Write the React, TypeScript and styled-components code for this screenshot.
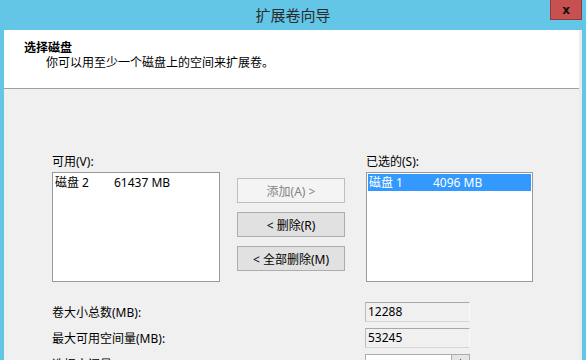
import React from "react";
import styled, { createGlobalStyle } from "styled-components";

const Global = createGlobalStyle`
  html, body {
    margin: 0;
    padding: 0;
    width: 586px;
    height: 360px;
    overflow: hidden;
  }
  body {
    font-family: "Noto Sans", "Noto Sans CJK SC", sans-serif;
    font-size: 12px;
    color: #000;
  }
`;

const Frame = styled.div`
  width: 586px;
  height: 360px;
  background: #63c6e7;
  display: flex;
  flex-direction: column;
  overflow: hidden;
`;

const TitleBar = styled.div`
  height: 30px;
  flex-shrink: 0;
  display: grid;
  grid-template-columns: 1fr auto 1fr;
  align-items: start;
`;

const Title = styled.div`
  grid-column: 2;
  font-family: "Noto Sans CJK SC", sans-serif;
  font-size: 15px;
  line-height: 30px;
  color: #2b2b2b;
`;

const CloseButton = styled.div`
  grid-column: 3;
  justify-self: end;
  margin-right: 4px;
  width: 30px;
  height: 19px;
  background: #c75050;
  border: 1px solid #8e3a3a;
  border-top: none;
  display: flex;
  align-items: center;
  justify-content: center;
  font-family: "DejaVu Sans", sans-serif;
  font-weight: bold;
  font-size: 12px;
  color: #111;
`;

const Client = styled.div`
  flex: 1;
  margin: 0 4px;
  border-right: 3px solid #ececec;
  display: flex;
  flex-direction: column;
  min-height: 0;
`;

const Header = styled.div`
  height: 58px;
  flex-shrink: 0;
  background: #fff;
  border-bottom: 1px solid #a0a0a0;
  padding: 10px 0 0 20px;
  box-sizing: border-box;
  height: 59px;
`;

const HeaderTitle = styled.div`
  font-weight: bold;
  line-height: 15px;
`;

const HeaderText = styled.div`
  line-height: 15px;
  margin-left: 22px;
`;

const Body = styled.div`
  flex: 1;
  background: #f0f0f0;
  padding: 65px 0 0 48px;
  overflow: hidden;
`;

const ListsRow = styled.div`
  display: flex;
  align-items: flex-start;
`;

const ListColumn = styled.div`
  display: flex;
  flex-direction: column;
`;

const FieldLabel = styled.div`
  height: 18px;
  line-height: 15px;
`;

const ListBox = styled.div<{ $width: number }>`
  width: ${(p) => p.$width}px;
  height: 110px;
  box-sizing: border-box;
  background: #fff;
  border: 1px solid #9a9a9a;
  padding: 1px 1px;
`;

const ListItem = styled.div<{ $selected?: boolean }>`
  display: flex;
  height: 17px;
  line-height: 17px;
  padding-left: 1px;
  background: ${(p) => (p.$selected ? "#3399ff" : "transparent")};
  color: ${(p) => (p.$selected ? "#fff" : "#000")};
`;

const NameCell = styled.span<{ $width: number }>`
  width: ${(p) => p.$width}px;
  flex-shrink: 0;
`;

const ButtonColumn = styled.div`
  display: flex;
  flex-direction: column;
  gap: 9px;
  margin: 24px 21px 0 17px;
`;

const Button = styled.div<{ $disabled?: boolean }>`
  width: 108px;
  height: 25px;
  box-sizing: border-box;
  display: flex;
  align-items: center;
  justify-content: center;
  background: ${(p) => (p.$disabled ? "#f4f4f4" : "#e1e1e1")};
  border: 1px solid ${(p) => (p.$disabled ? "#bfbfbf" : "#adadad")};
  color: ${(p) => (p.$disabled ? "#838383" : "#000")};
`;

const InfoRows = styled.div`
  display: flex;
  flex-direction: column;
  gap: 6px;
  margin-top: 20px;
`;

const InfoRow = styled.div`
  display: flex;
  align-items: center;
  height: 20px;
`;

const InfoLabel = styled.div`
  width: 313px;
  line-height: 15px;
`;

const ReadOnlyBox = styled.div`
  width: 105px;
  height: 20px;
  box-sizing: border-box;
  border: 1px solid #d7d7d7;
  border-top-color: #a8a8a8;
  border-left-color: #bcbcbc;
  border-right-color: #fafafa;
  padding-left: 2px;
  line-height: 18px;
`;

const SpinBox = styled.div`
  display: flex;
  height: 21px;
`;

const SpinInput = styled.div`
  width: 87px;
  box-sizing: border-box;
  background: #fff;
  border: 1px solid #abadb3;
  padding-left: 2px;
  line-height: 19px;
`;

const SpinButton = styled.div`
  width: 18px;
  box-sizing: border-box;
  background: #e5e5e5;
  border: 1px solid #acacac;
  border-left: none;
  display: flex;
  justify-content: center;
  padding-top: 4px;
`;

export default function App() {
  return (
    <>
      <Global />
      <Frame>
        <TitleBar>
          <Title>扩展卷向导</Title>
          <CloseButton>x</CloseButton>
        </TitleBar>
        <Client>
          <Header>
            <HeaderTitle>选择磁盘</HeaderTitle>
            <HeaderText>你可以用至少一个磁盘上的空间来扩展卷。</HeaderText>
          </Header>
          <Body>
            <ListsRow>
              <ListColumn>
                <FieldLabel>可用(V):</FieldLabel>
                <ListBox $width={168}>
                  <ListItem>
                    <NameCell $width={59}>磁盘 2</NameCell>
                    <span>61437 MB</span>
                  </ListItem>
                </ListBox>
              </ListColumn>
              <ButtonColumn>
                <Button $disabled>添加(A) &gt;</Button>
                <Button>&lt; 删除(R)</Button>
                <Button>&lt; 全部删除(M)</Button>
              </ButtonColumn>
              <ListColumn>
                <FieldLabel>已选的(S):</FieldLabel>
                <ListBox $width={167}>
                  <ListItem $selected>
                    <NameCell $width={64}>磁盘 1</NameCell>
                    <span>4096 MB</span>
                  </ListItem>
                </ListBox>
              </ListColumn>
            </ListsRow>
            <InfoRows>
              <InfoRow>
                <InfoLabel>卷大小总数(MB):</InfoLabel>
                <ReadOnlyBox>12288</ReadOnlyBox>
              </InfoRow>
              <InfoRow>
                <InfoLabel>最大可用空间量(MB):</InfoLabel>
                <ReadOnlyBox>53245</ReadOnlyBox>
              </InfoRow>
              <InfoRow>
                <InfoLabel>选择空间量(MB):</InfoLabel>
                <SpinBox>
                  <SpinInput>4096</SpinInput>
                  <SpinButton>
                    <svg width="7" height="4" viewBox="0 0 7 4">
                      <path d="M0 4 L3.5 0 L7 4 Z" fill="#333" />
                    </svg>
                  </SpinButton>
                </SpinBox>
              </InfoRow>
            </InfoRows>
          </Body>
        </Client>
      </Frame>
    </>
  );
}
